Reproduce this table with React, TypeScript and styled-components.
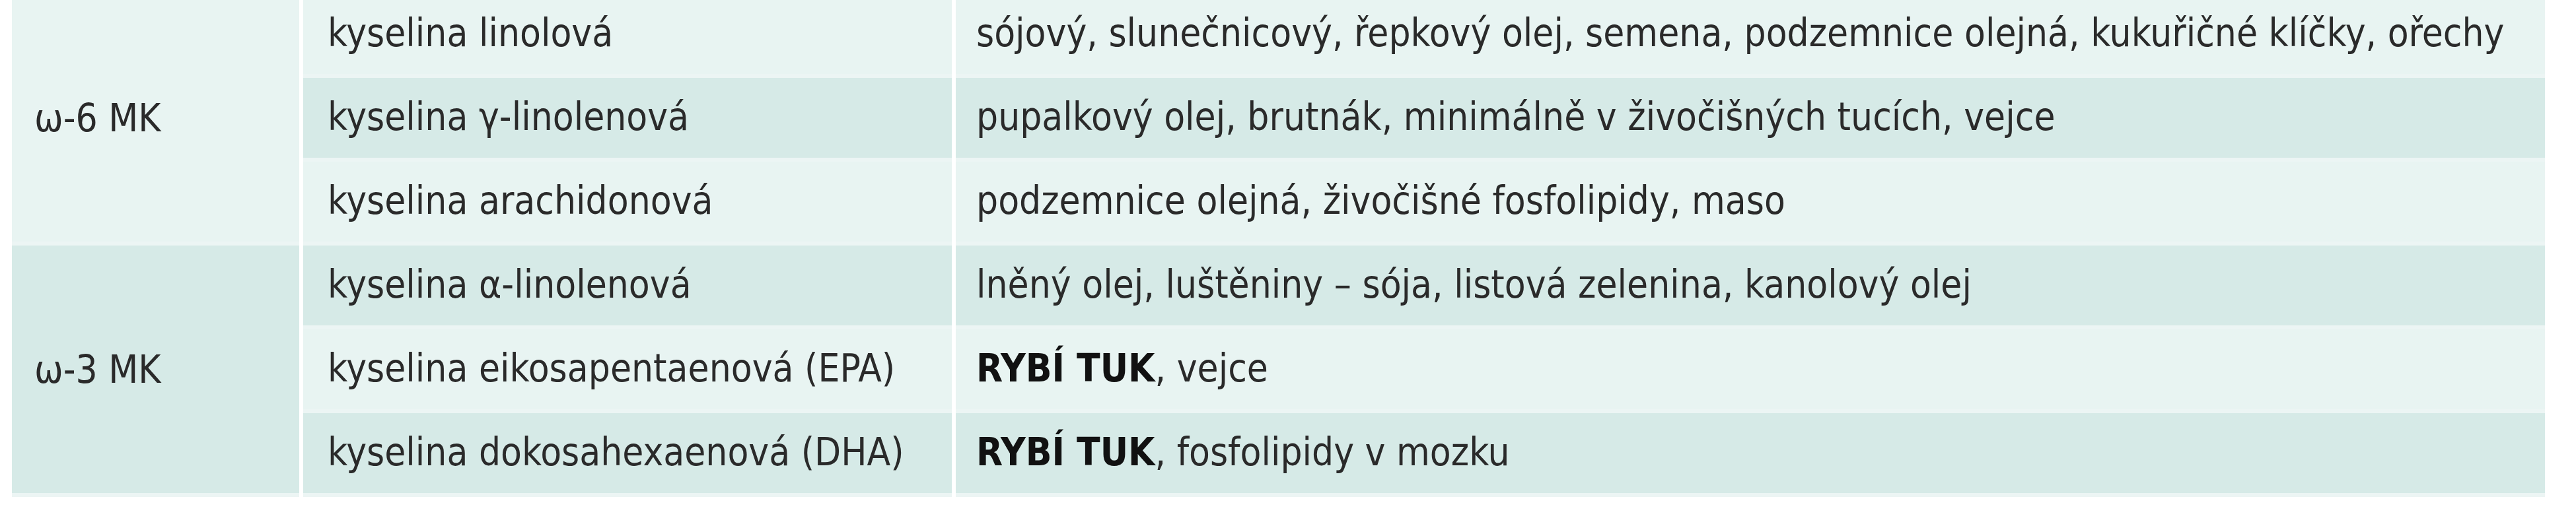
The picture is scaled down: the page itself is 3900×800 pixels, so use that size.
import React from 'react';
import styled, { createGlobalStyle } from 'styled-components';

const GlobalStyle = createGlobalStyle`
  html, body {
    margin: 0;
    padding: 0;
    background: #ffffff;
  }
  body {
    font-family: "DejaVu Sans Condensed", "DejaVu Sans", "Liberation Sans", sans-serif;
    color: #2a2a2a;
  }
`;

const LIGHT = '#e8f4f2';
const DARK = '#d6eae7';

const Page = styled.div`
  padding-left: 18px;
  overflow: hidden;
  height: 800px;
`;

const Table = styled.div`
  display: grid;
  grid-template-columns: 435px 982px 2406px;
  grid-auto-rows: 127px;
  column-gap: 6px;
  margin-top: -9px;
  width: 3835px;
`;

const Cell = styled.div<{ $tone: 'light' | 'dark'; $span?: number; $pad?: number }>`
  display: flex;
  align-items: center;
  box-sizing: border-box;
  padding: 0 0 ${(p) => (p.$span ? 0 : 3)}px ${(p) => p.$pad ?? 34}px;
  grid-row: ${(p) => (p.$span ? `span ${p.$span}` : 'auto')};
  background: ${(p) => (p.$tone === 'light' ? LIGHT : DARK)};
  border-bottom: 6px solid #ecf5f4;
  font-size: 58px;
  line-height: 1;
  white-space: nowrap;
`;

const Strong = styled.b`
  font-weight: 700;
  color: #111;
`;

type Row = { name: string; source: React.ReactNode };
type Group = { label: string; tone: 'light' | 'dark'; rows: Row[] };

const groups: Group[] = [
  {
    label: 'ω-6 MK',
    tone: 'light',
    rows: [
      {
        name: 'kyselina linolová',
        source: 'sójový, slunečnicový, řepkový olej, semena, podzemnice olejná, kukuřičné klíčky, ořechy',
      },
      {
        name: 'kyselina γ-linolenová',
        source: 'pupalkový olej, brutnák, minimálně v živočišných tucích, vejce',
      },
      {
        name: 'kyselina arachidonová',
        source: 'podzemnice olejná, živočišné fosfolipidy, maso',
      },
    ],
  },
  {
    label: 'ω-3 MK',
    tone: 'dark',
    rows: [
      {
        name: 'kyselina α-linolenová',
        source: 'lněný olej, luštěniny – sója, listová zelenina, kanolový olej',
      },
      {
        name: 'kyselina eikosapentaenová (EPA)',
        source: (
          <>
            <Strong>RYBÍ TUK</Strong>, vejce
          </>
        ),
      },
      {
        name: 'kyselina dokosahexaenová (DHA)',
        source: (
          <>
            <Strong>RYBÍ TUK</Strong>, fosfolipidy v mozku
          </>
        ),
      },
    ],
  },
];

export default function App() {
  let index = 0;
  return (
    <>
      <GlobalStyle />
      <Page>
        <Table>
          {groups.map((group) =>
            group.rows.map((row, i) => {
              const tone = index++ % 2 === 0 ? 'light' : 'dark';
              return (
                <React.Fragment key={row.name}>
                  {i === 0 && (
                    <Cell $tone={group.tone} $span={group.rows.length} $pad={34}>
                      {group.label}
                    </Cell>
                  )}
                  <Cell $tone={tone} $pad={37}>
                    {row.name}
                  </Cell>
                  <Cell $tone={tone} $pad={31}>
                    {row.source}
                  </Cell>
                </React.Fragment>
              );
            })
          )}
        </Table>
      </Page>
    </>
  );
}
